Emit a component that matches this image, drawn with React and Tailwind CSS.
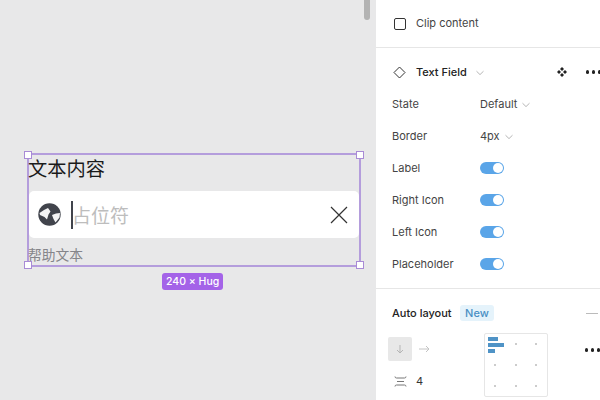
import React from 'react'

const Chevron = ({ className = 'ml-[5px]' }) => (
  <svg width="8" height="6" viewBox="0 0 8 6" fill="none" className={`mt-px shrink-0 ${className}`}>
    <path d="M0.5 1.2 L4 4.6 L7.5 1.2" stroke="#b5b5b5" strokeWidth="1" />
  </svg>
)

const Dots = ({ className }) => (
  <div className={`flex shrink-0 gap-[2.5px] ${className}`}>
    <span className="w-[3.5px] h-[3.5px] rounded-full bg-[#222]"></span>
    <span className="w-[3.5px] h-[3.5px] rounded-full bg-[#222]"></span>
    <span className="w-[3.5px] h-[3.5px] rounded-full bg-[#222]"></span>
  </div>
)

const Handle = ({ className }) => (
  <div className={`absolute w-2 h-2 bg-white border border-[#a98bd6] ${className}`}></div>
)

const PropRow = ({ label, children }) => (
  <div className="h-8 flex items-center pl-4">
    <div className="w-[88px] text-[#444]">{label}</div>
    {children}
  </div>
)

const Toggle = () => (
  <div className="w-6 h-3 rounded-full bg-[#5aa5e8] relative">
    <div className="absolute right-[1px] top-[1px] w-2.5 h-2.5 rounded-full bg-white"></div>
  </div>
)

const GridDot = () => <span className="w-[2px] h-[2px] bg-[#ccc] place-self-center"></span>

export default function App() {
  return (
    <div className="w-[600px] h-[400px] flex overflow-hidden bg-white font-['Inter','Noto_Sans_CJK_SC',sans-serif]">
      {/* canvas */}
      <div className="w-[376px] h-full bg-[#e8e8e9] relative">
        <div className="absolute left-[364px] top-0 w-[6px] h-5 rounded-b bg-[#b3b3b3]"></div>

        <div className="absolute left-[27px] top-[153px] w-[334px] h-[114px] border-2 border-[#b49ddc] font-['Noto_Sans_CJK_SC','Inter',sans-serif]">
          <Handle className="-left-[5px] -top-[4px]" />
          <Handle className="-right-[5px] -top-[4px]" />
          <Handle className="-left-[5px] -bottom-[4px]" />
          <Handle className="-right-[5px] -bottom-[4px]" />

          <div className="flex flex-col">
            <div className="h-[27px] -ml-px text-[19.25px] leading-[27px] text-[#1a1a1a]">文本内容</div>
            <div className="mt-[9px] h-[47px] bg-white rounded-[5px] flex items-center pl-[9px] pr-[10px]">
              <svg width="23" height="23" viewBox="0 0 23 23">
                <circle cx="11.5" cy="11.5" r="11.2" fill="#41444c" />
                <path d="M1.5 10 L6 7 L10 5 L12.5 8.5 L10.5 11.5 L9 16.5 L6.5 14 L2 12 Z M14 12 L18 10.5 L22 10 L21.5 14.5 L17.5 19.5 L15.5 16 Z" fill="#f4f4f5" />
              </svg>
              <div className="ml-[10px] w-[2px] h-[28px] bg-[#41444c]"></div>
              <div className="-ml-px text-[19px] text-[#bdbdbd] leading-none">占位符</div>
              <svg width="20" height="20" viewBox="0 0 20 20" className="ml-auto">
                <path d="M2 2 L18 18 M18 2 L2 18" stroke="#333" strokeWidth="1.2" />
              </svg>
            </div>
            <div className="mt-[6px] -ml-px text-[13.75px] leading-5 text-[#85858a]">帮助文本</div>
          </div>

          <div className="absolute left-[133px] top-[118px] h-[17px] px-[4px] rounded-[3px] bg-[#a463e8] text-white text-[10.5px] leading-[17px] font-medium whitespace-nowrap font-['Inter',sans-serif]">
            240 × Hug
          </div>
        </div>
      </div>

      {/* properties */}
      <div className="flex-1 min-w-0 h-full text-[11px] text-[#333] flex flex-col">
        <div className="h-[48px] shrink-0 border-b border-[#e6e6e6] flex items-center pl-[18px]">
          <div className="w-3 h-3 rounded-[2px] border border-[#333]"></div>
          <div className="ml-[10px] text-[#444]">Clip content</div>
        </div>

        <div className="h-[241px] shrink-0 border-b border-[#e6e6e6] pt-2">
          <div className="h-8 flex items-center pl-[17px] relative">
            <svg width="13" height="13" viewBox="0 0 13 13" fill="none" className="shrink-0">
              <path d="M6.5 1 L12 6.5 L6.5 12 L1 6.5 Z" stroke="#333" strokeWidth="1" />
            </svg>
            <div className="ml-[10px] font-medium text-[#222] whitespace-nowrap shrink-0">Text Field</div>
            <Chevron className="ml-[9px]" />
            <svg width="12" height="12" viewBox="0 0 12 12" className="ml-[72px] shrink-0">
              <path d="M6 1 L8 3 L6 5 L4 3 Z M6 7 L8 9 L6 11 L4 9 Z M3 4 L5 6 L3 8 L1 6 Z M9 4 L11 6 L9 8 L7 6 Z" fill="#222" />
            </svg>
            <Dots className="ml-[18px]" />
          </div>
          <PropRow label="State"><span className="text-[#444]">Default</span><Chevron /></PropRow>
          <PropRow label="Border"><span className="text-[#444]">4px</span><Chevron /></PropRow>
          <PropRow label="Label"><Toggle /></PropRow>
          <PropRow label="Right Icon"><Toggle /></PropRow>
          <PropRow label="Left Icon"><Toggle /></PropRow>
          <PropRow label="Placeholder"><Toggle /></PropRow>
        </div>

        <div className="flex-1 relative pl-4">
          <div className="h-[48px] flex items-center">
            <div className="font-medium text-[#222]">Auto layout</div>
            <div className="ml-2 h-4 px-[5.5px] rounded-[3px] bg-[#e5f3fb] text-[#4a8fc4] font-medium leading-4">New</div>
            <div className="ml-auto mr-[2px] w-3 h-px bg-[#bbb]"></div>
          </div>

          <div className="flex">
            <div className="w-[96px] -ml-1">
              <div className="flex items-center">
                <div className="w-6 h-6 rounded-[2px] bg-[#e8e8e8] flex items-center justify-center">
                  <svg width="10" height="10" viewBox="0 0 10 10" fill="none">
                    <path d="M5 1 V9 M2 6 L5 9 L8 6" stroke="#b5b5b5" strokeWidth="1" />
                  </svg>
                </div>
                <svg width="12" height="10" viewBox="0 0 12 10" fill="none" className="ml-[6px]">
                  <path d="M1 5 H11 M8 2 L11 5 L8 8" stroke="#c4c4c4" strokeWidth="1" />
                </svg>
              </div>
              <div className="flex items-center mt-[12px] pl-[6px]">
                <svg width="13" height="13" viewBox="0 0 13 13" fill="none">
                  <path d="M1 1.5 Q1 3 2.5 3 H10.5 Q12 3 12 1.5 M1 11.5 Q1 10 2.5 10 H10.5 Q12 10 12 11.5" stroke="#777" strokeWidth="1" />
                  <path d="M3 6.5 H10" stroke="#777" strokeWidth="1" />
                </svg>
                <span className="ml-[9px] text-[#333]">4</span>
              </div>
            </div>

            <div className="w-16 h-16 -mt-1 rounded-[2px] border border-[#e6e6e6] relative grid grid-cols-3 grid-rows-3">
              <GridDot /><GridDot /><GridDot />
              <GridDot /><GridDot /><GridDot />
              <GridDot /><GridDot /><GridDot />
              <div className="absolute left-[3px] top-[3px] flex flex-col gap-[2px]">
                <div className="w-[10px] h-1 bg-[#4f93c6]"></div>
                <div className="w-4 h-1 bg-[#4f93c6]"></div>
                <div className="w-[7px] h-1 bg-[#4f93c6]"></div>
              </div>
            </div>

            <Dots className="ml-[37px] mt-[11px] h-[4px]" />
          </div>
        </div>
      </div>
    </div>
  )
}
